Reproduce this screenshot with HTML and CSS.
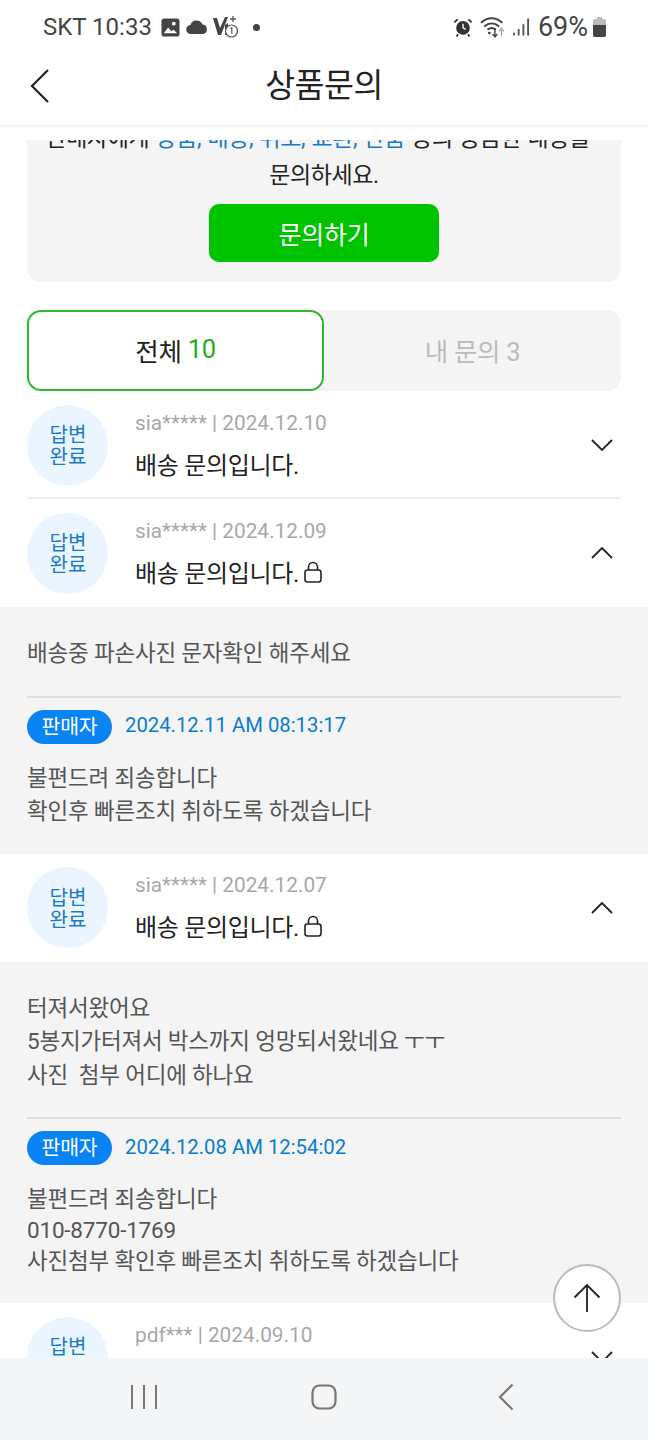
FILE: index.html
```html
<!DOCTYPE html>
<html lang="ko">
<head>
    <meta charset="UTF-8">
    <meta name="viewport" content="width=device-width, initial-scale=1.0">
    <title>상품문의</title>
    <link rel="stylesheet" href="styles.css">
</head>
<body>
    <div class="phone">
        <!-- Status bar -->
        <div class="status-bar">
            <div class="status-left">
                <span class="status-text">SKT 10:33</span>
                <svg class="st-image" width="19" height="19" viewBox="0 0 20 20"><rect x="0.5" y="0.5" width="19" height="19" rx="3" fill="#444"/><circle cx="13.5" cy="6" r="2" fill="#fff"/><path d="M3 16l4.5-6 3.5 4 2-2 4 4z" fill="#fff"/></svg>
                <svg width="22" height="14" viewBox="0 0 22 14"><path d="M5 14a4.500 4.500 0 0 1-.6-9A6.500 6.500 0 0 1 16.500 4.500 4.800 4.800 0 0 1 17 14z" fill="#444"/></svg>
                <svg class="st-key" width="25" height="24" viewBox="0 0 25 24"><path d="M0 3h4l3 10 5-11h3L8 20H5z" fill="#444"/><path d="M12 10l3-2v12h-3z" fill="#444"/><path d="M20 1v6M17 4h6" stroke="#555" stroke-width="1.300"/><circle cx="18.500" cy="16" r="6" fill="#fff" stroke="#555" stroke-width="1.200"/><path d="M17.500 13.500l1.300-.8v6.300" fill="none" stroke="#555" stroke-width="1.200"/></svg>
                <span class="status-dot"></span>
            </div>
            <div class="status-right">
                <svg width="20" height="22" viewBox="0 0 22 22"><circle cx="11" cy="12" r="7.500" fill="#333"/><path d="M11 7.500V12l3 1.500" fill="none" stroke="#fff" stroke-width="1.500"/><path d="M1.500 6L5 2.500M20.500 6L17 2.500M5.500 19l-1.500 2.500M16.500 19l1.500 2.500" stroke="#333" stroke-width="2"/></svg>
                <svg class="st-wifi" width="28" height="24" viewBox="0 0 30 24"><path d="M1 7.500c7-6.500 16-6.500 23 0M4.500 11.500c5-4.500 11-4.500 16 0M8 15c3-2.500 6-2.500 9 0" fill="none" stroke="#444" stroke-width="2"/><circle cx="10" cy="18.500" r="1.500" fill="#444"/><path d="M16 13v9M13.500 19.500l2.500 3 2.500-3" fill="none" stroke="#444" stroke-width="1.500"/><path d="M23 22v-8M20.500 16.500l2.500-3 2.500 3" fill="none" stroke="#aaa" stroke-width="1.500"/></svg>
                <svg class="st-signal" width="17" height="18" viewBox="0 0 18 18"><path d="M1 15v3M6 11v7M11 6v12M16 0v18" stroke="#555" stroke-width="2"/></svg>
                <span class="status-text big">69%</span>
                <svg class="st-battery" width="13" height="20" viewBox="0 0 13 20"><path d="M4 0h5v2H4z" fill="#bbb"/><rect y="2" width="13" height="18" rx="2" fill="#bbb"/><path d="M0 8h13v10a2 2 0 0 1-2 2H2a2 2 0 0 1-2-2z" fill="#444"/></svg>
            </div>
        </div>

        <!-- Page header -->
        <div class="page-header">
            <svg class="back-icon" width="22" height="36" viewBox="0 0 22 36"><path d="M19 2L3 18l16 16" fill="none" stroke="#222" stroke-width="2.200"/></svg>
            <h1>상품문의</h1>
        </div>

        <div class="content">
            <!-- Notice card, scrolled partly out of view -->
            <div class="notice">
                <p>판매자에게 <span class="notice-link">상품, 배송, 취소, 교환, 반품</span> 등의 궁금한 내용을&nbsp;&nbsp;<br>문의하세요.</p>
                <button type="button" class="ask-button">문의하기</button>
            </div>

            <div class="tabs">
                <div class="tab active">전체 <span class="count">10</span></div>
                <div class="tab">내 문의 3</div>
            </div>

            <div class="qa-row with-line">
                <div class="badge">답변<br>완료</div>
                <div class="qa-info">
                    <div class="qa-meta">sia***** | 2024.12.10</div>
                    <div class="qa-title">배송 문의입니다.</div>
                </div>
                <svg class="chevron" width="24" height="14" viewBox="0 0 24 14"><path d="M2 2l10 10L22 2" fill="none" stroke="#222" stroke-width="1.800"/></svg>
            </div>

            <div class="qa-row">
                <div class="badge">답변<br>완료</div>
                <div class="qa-info">
                    <div class="qa-meta">sia***** | 2024.12.09</div>
                    <div class="qa-title">배송 문의입니다.
                        <svg class="lock" width="18" height="22" viewBox="0 0 18 22"><rect x="1" y="9" width="16" height="12" rx="2.500" fill="none" stroke="#222" stroke-width="1.600"/><path d="M4.500 9V6a4.500 4.500 0 0 1 9 0v3" fill="none" stroke="#222" stroke-width="1.600"/></svg>
                    </div>
                </div>
                <svg class="chevron" width="24" height="14" viewBox="0 0 24 14"><path d="M2 12L12 2l10 10" fill="none" stroke="#222" stroke-width="1.800"/></svg>
            </div>
            <div class="qa-detail">
                <p class="question">배송중 파손사진 문자확인 해주세요</p>
                <div class="answer">
                    <div class="answer-head">
                        <span class="seller-pill">판매자</span>
                        <span class="answer-date">2024.12.11 AM 08:13:17</span>
                    </div>
                    <p>불편드려 죄송합니다<br>확인후 빠른조치 취하도록 하겠습니다</p>
                </div>
            </div>

            <div class="qa-row">
                <div class="badge">답변<br>완료</div>
                <div class="qa-info">
                    <div class="qa-meta">sia***** | 2024.12.07</div>
                    <div class="qa-title">배송 문의입니다.
                        <svg class="lock" width="18" height="22" viewBox="0 0 18 22"><rect x="1" y="9" width="16" height="12" rx="2.500" fill="none" stroke="#222" stroke-width="1.600"/><path d="M4.500 9V6a4.500 4.500 0 0 1 9 0v3" fill="none" stroke="#222" stroke-width="1.600"/></svg>
                    </div>
                </div>
                <svg class="chevron" width="24" height="14" viewBox="0 0 24 14"><path d="M2 12L12 2l10 10" fill="none" stroke="#222" stroke-width="1.800"/></svg>
            </div>
            <div class="qa-detail">
                <p class="question">터져서왔어요<br>5봉지가터져서 박스까지 엉망되서왔네요 ㅜㅜ<br>사진&nbsp; 첨부 어디에 하나요</p>
                <div class="answer">
                    <div class="answer-head">
                        <span class="seller-pill">판매자</span>
                        <span class="answer-date">2024.12.08 AM 12:54:02</span>
                    </div>
                    <p>불편드려 죄송합니다<span class="phone-line">010-8770-1769</span>사진첨부 확인후 빠른조치 취하도록 하겠습니다</p>
                </div>
            </div>

            <div class="qa-row">
                <div class="badge">답변<br>완료</div>
                <div class="qa-info">
                    <div class="qa-meta">pdf*** | 2024.09.10</div>
                    <div class="qa-title">배송 문의입니다.</div>
                </div>
                <svg class="chevron" width="24" height="14" viewBox="0 0 24 14"><path d="M2 2l10 10L22 2" fill="none" stroke="#222" stroke-width="1.800"/></svg>
            </div>

            <!-- Scroll to top -->
            <div class="top-button">
                <svg width="30" height="30" viewBox="0 0 30 30"><path d="M15 29V2M2.500 14.500L15 2l12.500 12.500" fill="none" stroke="#222" stroke-width="1.800"/></svg>
            </div>
        </div>

        <!-- Android navigation bar -->
        <div class="nav-bar">
            <svg width="28" height="26" viewBox="0 0 28 26"><path d="M2 1v24M14 1v24M26 1v24" stroke="#777" stroke-width="2"/></svg>
            <svg class="nav-home" width="26" height="26" viewBox="0 0 26 26"><rect x="1.500" y="1.500" width="23" height="23" rx="7" fill="none" stroke="#777" stroke-width="2.200"/></svg>
            <svg width="16" height="28" viewBox="0 0 16 28"><path d="M14.500 1.500L2 14l12.500 12.500" fill="none" stroke="#777" stroke-width="2.200"/></svg>
        </div>
    </div>
</body>
</html>
```

FILE: styles.css
```css
body {
    margin: 0;
    padding: 0;
    background-color: #fff;
    color: #222;
    font-family: Roboto, "Noto Sans CJK KR", sans-serif;
}
p {
    margin: 0;
}
.phone {
    width: 648px;
    height: 1440px;
    display: flex;
    flex-direction: column;
    overflow: hidden;
}

/* Status bar */
.status-bar {
    height: 54px;
    padding: 0 42px 0 43px;
    display: flex;
    justify-content: space-between;
    align-items: center;
    flex-shrink: 0;
}
.status-left,
.status-right {
    display: flex;
    align-items: center;
}
.status-left {
    gap: 6px;
}
.status-text {
    font-size: 24px;
    color: #444;
}
.status-text.big {
    font-size: 27px;
    margin: 0 5px 0 8px;
}
.st-image {
    margin-left: 3px;
}
.st-key {
    margin-left: -1px;
}
.st-wifi {
    margin-left: 7px;
}
.st-signal {
    margin-left: 5px;
}
.status-dot {
    width: 7px;
    height: 7px;
    margin-left: 9px;
    border-radius: 50%;
    background-color: #444;
}

/* Header */
.page-header {
    height: 56px;
    padding-bottom: 15px;
    position: relative;
    display: flex;
    justify-content: center;
    align-items: center;
    border-bottom: 2px solid #f5f5f5;
    flex-shrink: 0;
}
.page-header h1 {
    margin: 0;
    font-size: 32.500px;
    font-weight: 400;
    letter-spacing: -0.5px;
    color: #222;
}
.back-icon {
    position: absolute;
    left: 29px;
    top: 14px;
}

/* Scrolling content */
.content {
    flex: 1;
    margin-top: 13px;
    position: relative;
    overflow: hidden;
}
.notice {
    margin: -20px 27px 0;
    height: 162px;
    background-color: #f4f4f4;
    border-radius: 0 0 14px 14px;
    text-align: center;
    font-size: 23px;
    line-height: 37px;
    letter-spacing: -0.4px;
    word-spacing: 1px;
}
.notice-link {
    color: #1a7ac7;
}
.ask-button {
    display: block;
    width: 230px;
    height: 58px;
    margin: 10px auto 0;
    border: none;
    border-radius: 10px;
    background-color: #00c300;
    color: #fff;
    font-family: inherit;
    font-size: 25px;
    letter-spacing: -0.3px;
}
.tabs {
    margin: 28px 27px 0;
    height: 81px;
    display: flex;
    background-color: #f4f4f4;
    border-radius: 14px;
}
.tab {
    width: 50%;
    box-sizing: border-box;
    padding-bottom: 3px;
    display: flex;
    justify-content: center;
    align-items: center;
    gap: 6px;
    font-size: 25.500px;
    color: #bbb;
    letter-spacing: -0.3px;
}
.tab.active {
    background-color: #fff;
    border: 2px solid #2eb82e;
    border-radius: 14px;
    color: #222;
}
.count {
    color: #1cb01c;
}

/* Question rows */
.qa-row {
    height: 108px;
    padding: 0 27px;
    display: flex;
    align-items: center;
    gap: 27px;
    box-sizing: border-box;
    position: relative;
    background-color: #fff;
}
.with-line::after {
    content: "";
    position: absolute;
    left: 27px;
    right: 27px;
    bottom: 0;
    height: 2px;
    background-color: #efefef;
}
.badge {
    width: 81px;
    height: 81px;
    padding: 2px 0 0 1px;
    box-sizing: border-box;
    border-radius: 50%;
    background-color: #eaf5ff;
    color: #1a7ac7;
    font-size: 20px;
    line-height: 22px;
    display: flex;
    align-items: center;
    justify-content: center;
    text-align: center;
    flex-shrink: 0;
}
.qa-info {
    flex: 1;
}
.qa-meta {
    font-size: 20.800px;
    color: #a8a8a8;
    line-height: 28px;
}
.qa-title {
    margin-top: 13px;
    font-size: 24px;
    line-height: 32px;
    letter-spacing: -0.3px;
    display: flex;
    align-items: center;
    gap: 5px;
}
.lock {
    margin-top: -4px;
}
.chevron {
    margin-right: 7px;
}

/* Opened question */
.qa-detail {
    padding: 30px 27px 25px;
    background-color: #f4f4f4;
    font-size: 22.500px;
    line-height: 33.500px;
    color: #555;
    letter-spacing: -0.2px;
}
.answer {
    margin-top: 25px;
    padding-top: 12px;
    border-top: 2px solid #dedede;
}
.answer-head {
    display: flex;
    align-items: center;
    gap: 13px;
    margin-bottom: 18px;
}
.seller-pill {
    width: 85px;
    height: 34px;
    border-radius: 17px;
    background-color: #0a84f5;
    color: #fff;
    font-size: 20.500px;
    line-height: 34px;
    text-align: center;
}
.answer-date {
    font-size: 20.300px;
    line-height: 30px;
    padding-bottom: 3px;
    color: #0a7ccf;
    letter-spacing: 0;
}
.phone-line {
    display: block;
    line-height: 26px;
    margin-bottom: 2px;
}

.top-button {
    position: absolute;
    left: 553px;
    top: 1124px;
    width: 64px;
    height: 64px;
    border: 2px solid #bbb;
    border-radius: 50%;
    background-color: #fff;
    display: flex;
    align-items: center;
    justify-content: center;
}

/* Navigation bar */
.nav-bar {
    height: 82px;
    flex-shrink: 0;
    background-color: #f4f5f7;
    display: flex;
    align-items: center;
    padding: 0 0 4px 130px;
    box-sizing: border-box;
}
.nav-home {
    margin: 0 161px 0 153px;
}
```
